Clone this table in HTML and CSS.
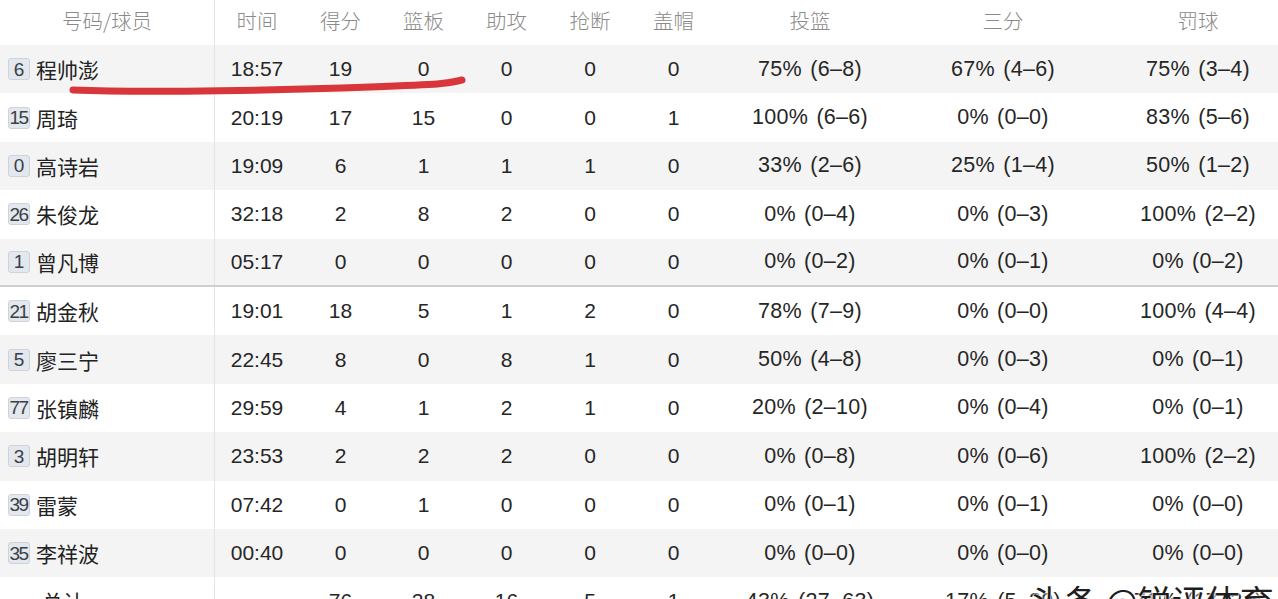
FILE: index.html
```html
<!DOCTYPE html>
<html lang="zh">
<head>
<meta charset="utf-8">
<title>球员数据</title>
<link rel="stylesheet" href="styles.css">
</head>
<body>
<div class="board">
  <div class="row head">
    <div class="cell name-cell center">号码/球员</div>
    <div class="cell">时间</div><div class="cell">得分</div><div class="cell">篮板</div><div class="cell">助攻</div><div class="cell">抢断</div><div class="cell">盖帽</div><div class="cell">投篮</div><div class="cell">三分</div><div class="cell">罚球</div>
  </div>

  <div class="row grey">
    <div class="cell name-cell"><span class="badge">6</span><span class="pname">程帅澎</span></div>
    <div class="cell">18:57</div><div class="cell">19</div><div class="cell">0</div><div class="cell">0</div><div class="cell">0</div><div class="cell">0</div><div class="cell pct">75% (6–8)</div><div class="cell pct">67% (4–6)</div><div class="cell pct">75% (3–4)</div>
  </div>
  <div class="row">
    <div class="cell name-cell"><span class="badge two">15</span><span class="pname">周琦</span></div>
    <div class="cell">20:19</div><div class="cell">17</div><div class="cell">15</div><div class="cell">0</div><div class="cell">0</div><div class="cell">1</div><div class="cell pct">100% (6–6)</div><div class="cell pct">0% (0–0)</div><div class="cell pct">83% (5–6)</div>
  </div>
  <div class="row grey">
    <div class="cell name-cell"><span class="badge">0</span><span class="pname">高诗岩</span></div>
    <div class="cell">19:09</div><div class="cell">6</div><div class="cell">1</div><div class="cell">1</div><div class="cell">1</div><div class="cell">0</div><div class="cell pct">33% (2–6)</div><div class="cell pct">25% (1–4)</div><div class="cell pct">50% (1–2)</div>
  </div>
  <div class="row">
    <div class="cell name-cell"><span class="badge two">26</span><span class="pname">朱俊龙</span></div>
    <div class="cell">32:18</div><div class="cell">2</div><div class="cell">8</div><div class="cell">2</div><div class="cell">0</div><div class="cell">0</div><div class="cell pct">0% (0–4)</div><div class="cell pct">0% (0–3)</div><div class="cell pct">100% (2–2)</div>
  </div>
  <div class="row grey split">
    <div class="cell name-cell"><span class="badge">1</span><span class="pname">曾凡博</span></div>
    <div class="cell">05:17</div><div class="cell">0</div><div class="cell">0</div><div class="cell">0</div><div class="cell">0</div><div class="cell">0</div><div class="cell pct">0% (0–2)</div><div class="cell pct">0% (0–1)</div><div class="cell pct">0% (0–2)</div>
  </div>

  <div class="row">
    <div class="cell name-cell"><span class="badge two">21</span><span class="pname">胡金秋</span></div>
    <div class="cell">19:01</div><div class="cell">18</div><div class="cell">5</div><div class="cell">1</div><div class="cell">2</div><div class="cell">0</div><div class="cell pct">78% (7–9)</div><div class="cell pct">0% (0–0)</div><div class="cell pct">100% (4–4)</div>
  </div>
  <div class="row grey">
    <div class="cell name-cell"><span class="badge">5</span><span class="pname">廖三宁</span></div>
    <div class="cell">22:45</div><div class="cell">8</div><div class="cell">0</div><div class="cell">8</div><div class="cell">1</div><div class="cell">0</div><div class="cell pct">50% (4–8)</div><div class="cell pct">0% (0–3)</div><div class="cell pct">0% (0–1)</div>
  </div>
  <div class="row">
    <div class="cell name-cell"><span class="badge two">77</span><span class="pname">张镇麟</span></div>
    <div class="cell">29:59</div><div class="cell">4</div><div class="cell">1</div><div class="cell">2</div><div class="cell">1</div><div class="cell">0</div><div class="cell pct">20% (2–10)</div><div class="cell pct">0% (0–4)</div><div class="cell pct">0% (0–1)</div>
  </div>
  <div class="row grey">
    <div class="cell name-cell"><span class="badge">3</span><span class="pname">胡明轩</span></div>
    <div class="cell">23:53</div><div class="cell">2</div><div class="cell">2</div><div class="cell">2</div><div class="cell">0</div><div class="cell">0</div><div class="cell pct">0% (0–8)</div><div class="cell pct">0% (0–6)</div><div class="cell pct">100% (2–2)</div>
  </div>
  <div class="row">
    <div class="cell name-cell"><span class="badge two">39</span><span class="pname">雷蒙</span></div>
    <div class="cell">07:42</div><div class="cell">0</div><div class="cell">1</div><div class="cell">0</div><div class="cell">0</div><div class="cell">0</div><div class="cell pct">0% (0–1)</div><div class="cell pct">0% (0–1)</div><div class="cell pct">0% (0–0)</div>
  </div>
  <div class="row grey">
    <div class="cell name-cell"><span class="badge two">35</span><span class="pname">李祥波</span></div>
    <div class="cell">00:40</div><div class="cell">0</div><div class="cell">0</div><div class="cell">0</div><div class="cell">0</div><div class="cell">0</div><div class="cell pct">0% (0–0)</div><div class="cell pct">0% (0–0)</div><div class="cell pct">0% (0–0)</div>
  </div>
  <div class="row">
    <div class="cell name-cell total"><span class="pname">总计</span></div>
    <div class="cell">-</div><div class="cell">76</div><div class="cell">28</div><div class="cell">16</div><div class="cell">5</div><div class="cell">1</div><div class="cell pct">43% (27–63)</div><div class="cell pct">17% (5–29)</div><div class="cell pct">71% (17–24)</div>
  </div>

  <svg class="mark" width="1278" height="599" viewBox="0 0 1278 599">
    <path d="M73 90 C 150 93, 290 90, 370 87 S 445 84, 462 80" fill="none" stroke="#d8363a" stroke-width="7" stroke-linecap="round"/>
  </svg>
  <div class="watermark">头条 @锐评体育</div>
</div>
</body>
</html>
```

FILE: styles.css
```css
html, body {
  margin: 0;
  padding: 0;
  background: #ffffff;
  overflow: hidden;
}

.board {
  position: relative;
  width: 1295px;
  font-family: "Liberation Sans", "Noto Sans CJK SC", sans-serif;
  color: #262626;
}

.row {
  display: grid;
  grid-template-columns: 215px 84px 83px 83px 83px 84px 83px 190px 196px 194px;
  height: 48.4px;
  align-items: stretch;
  font-size: 21px;
  background: #ffffff;
}

.row.grey {
  background: #f4f4f4;
}

.row.split {
  border-bottom: 2px solid #cfcfcf;
  height: 46.4px;
}

.row.head {
  height: 45px;
  box-sizing: border-box;
  padding-bottom: 5px;
  font-family: "Noto Sans CJK SC", sans-serif;
  font-size: 20.5px;
  font-weight: 300;
  color: #8a8a8a;
}

.row.head .name-cell {
  margin-bottom: -5px;
  padding-bottom: 5px;
}

.cell {
  display: flex;
  align-items: center;
  justify-content: center;
  white-space: nowrap;
}

.pct {
  font-size: 21.5px;
  word-spacing: 2px;
  letter-spacing: 0.3px;
}

.name-cell {
  justify-content: flex-start;
  border-right: 1px solid #e4e4e4;
  padding-left: 8px;
  gap: 6px;
}

.name-cell.center {
  justify-content: center;
  padding-left: 0;
}

.name-cell.total {
  padding-left: 42px;
}

.pname {
  font-family: "Noto Sans CJK SC", sans-serif;
  font-size: 21px;
  color: #222222;
}

.badge {
  width: 22px;
  height: 22px;
  box-sizing: border-box;
  display: flex;
  align-items: center;
  justify-content: center;
  background: #e3e7ee;
  border: 1px solid #cdd2db;
  border-radius: 3px;
  font-family: "Liberation Sans", sans-serif;
  font-size: 19px;
  line-height: 1;
  color: #3a3f48;
}

.badge.two {
  letter-spacing: -1.5px;
  padding-right: 1px;
}

.mark {
  position: absolute;
  left: 0;
  top: 0;
  pointer-events: none;
}

.watermark {
  position: absolute;
  left: 1030px;
  top: 576px;
  font-family: "Noto Sans CJK SC", sans-serif;
  font-size: 34px;
  color: #1e1e1e;
  white-space: nowrap;
  text-shadow: 0 0 2px #ffffff, 0 0 2px #ffffff, 0 0 3px #ffffff;
}
```
